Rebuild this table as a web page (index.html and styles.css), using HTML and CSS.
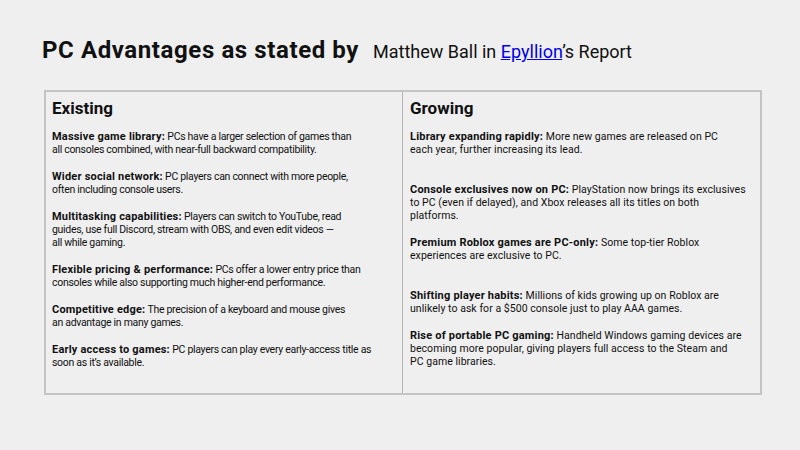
FILE: index.html
```html
<!DOCTYPE html>
<html>
<head>
<meta charset="utf-8">
<link rel="stylesheet" href="styles.css">
</head>
<body>
<div class="page">
  <h1 class="title"><span class="main">PC Advantages as stated by</span><span class="sub">Matthew Ball in <a href="#">Epyllion</a>’s Report</span></h1>
  <div class="box">
    <div class="col">
      <h2 class="head">Existing</h2>
      <p class="item"><b>Massive game library:</b> PCs have a larger selection of games than<br>all consoles combined, with near-full backward compatibility.</p>
      <p class="item"><b>Wider social network:</b> PC players can connect with more people,<br>often including console users.</p>
      <p class="item"><b>Multitasking capabilities:</b> Players can switch to YouTube, read<br>guides, use full Discord, stream with OBS, and even edit videos —<br>all while gaming.</p>
      <p class="item"><b>Flexible pricing &amp; performance:</b> PCs offer a lower entry price than<br>consoles while also supporting much higher-end performance.</p>
      <p class="item"><b>Competitive edge:</b> The precision of a keyboard and mouse gives<br>an advantage in many games.</p>
      <p class="item"><b>Early access to games:</b> PC players can play every early-access title as<br>soon as it’s available.</p>
    </div>
    <div class="col right">
      <h2 class="head">Growing</h2>
      <p class="item"><b>Library expanding rapidly:</b> More new games are released on PC<br>each year, further increasing its lead.</p>
      <p class="item spaced"><b>Console exclusives now on PC:</b> PlayStation now brings its exclusives<br>to PC (even if delayed), and Xbox releases all its titles on both<br>platforms.</p>
      <p class="item"><b>Premium Roblox games are PC-only:</b> Some top-tier Roblox<br>experiences are exclusive to PC.</p>
      <p class="item spaced"><b>Shifting player habits:</b> Millions of kids growing up on Roblox are<br>unlikely to ask for a $500 console just to play AAA games.</p>
      <p class="item"><b>Rise of portable PC gaming:</b> Handheld Windows gaming devices are<br>becoming more popular, giving players full access to the Steam and<br>PC game libraries.</p>
    </div>
  </div>
</div>
</body>
</html>
```
FILE: styles.css
```css
html, body {
  margin: 0;
  padding: 0;
  background: #efefef;
}
body {
  font-family: Roboto, "Noto Sans", sans-serif;
  color: #111;
}
.page {
  padding: 37px 0 0 42px;
}
.title {
  margin: 0;
  display: flex;
  align-items: baseline;
  gap: 14px;
  line-height: 26px;
}
.main {
  font-size: 24px;
  font-weight: 700;
  letter-spacing: 0.6px;
}
.sub {
  font-size: 18px;
  font-weight: 400;
}
.sub a {
  color: #0000ee;
  text-decoration: underline;
}
.box {
  margin: 25px 0 0 2px;
  width: 718px;
  height: 305px;
  box-sizing: border-box;
  border: 2px solid #c4c4c4;
  display: grid;
  grid-template-columns: 356px 1fr;
}
.col {
  padding: 6px 0 0 6px;
}
.right {
  border-left: 1px solid #b4b4b4;
  padding-left: 7px;
}
.head {
  margin: 0 0 12px;
  font-size: 17px;
  line-height: 20px;
  font-weight: 700;
}
.item {
  margin: 0 0 14px;
  font-size: 10.5px;
  line-height: 13px;
  letter-spacing: -0.3px;
  white-space: nowrap;
}
.right .item {
  letter-spacing: 0.05px;
}
.item b {
  font-weight: 700;
  font-size: 11px;
  letter-spacing: 0.2px;
}
.spaced {
  margin-top: 27px;
}
```
